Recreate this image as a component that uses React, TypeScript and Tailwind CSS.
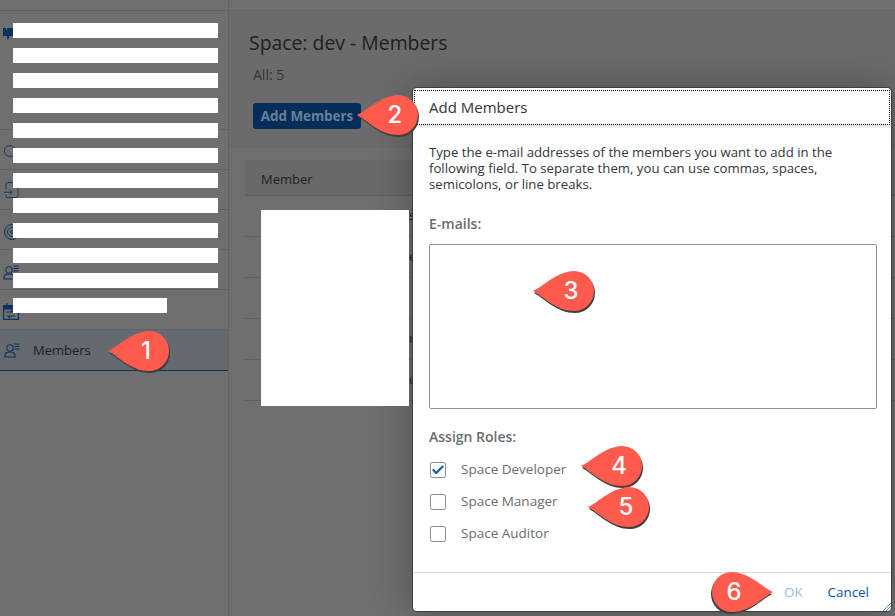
import { Check, Cloud, FileInput, Target } from "lucide-react";
import type { ReactNode } from "react";

const FONT = "font-['Open_Sans','Noto_Sans',sans-serif]";

const BARS = [218, 218, 218, 218, 218, 218, 218, 218, 218, 218, 218, 167];

const ROWS = [
  { tail: "s" },
  { tail: "e" },
  { tail: "" },
  { tail: "r" },
  { tail: "c" },
];

function UserListIcon() {
  return (
    <svg width="16" height="16" viewBox="0 0 16 16" fill="none" stroke="#0a3160" strokeWidth="1.1">
      <circle cx="6" cy="6" r="3.2" />
      <path d="M1 15v-1.5C1 11 3 10 6 10s5 1 5 3.5V15z" />
      <path d="M10.5 2h5M10.5 4.5h5M10.5 7h5" />
    </svg>
  );
}

function CalendarIcon() {
  return (
    <svg width="16" height="18" viewBox="0 0 16 18" fill="none" stroke="#0a3160" strokeWidth="1.2" className="mt-[12px]">
      <rect x="0.6" y="3.6" width="14.8" height="13.8" />
      <path d="M1 4h14v3H1z" fill="#0a3160" />
      <path d="M4 1v3M11 1v3M3 10h7l-2-2M12 14H5l2 2" />
    </svg>
  );
}

function NavRow({ icon, h, children }: { icon: ReactNode; h: string; children?: ReactNode }) {
  return (
    <div className={`${h} flex border-b border-[#626262] pl-[3px]`}>
      {icon}
      {children}
    </div>
  );
}

function Marker({ n, pos, flip }: { n: number; pos: string; flip?: boolean }) {
  return (
    <div className={`absolute ${pos} h-[40px] w-[62px]`}>
      <svg
        width="62"
        height="42"
        viewBox="0 0 62 42"
        className={`absolute inset-0 ${flip ? "-scale-x-100" : ""}`}
      >
        <path
          d="M1 22C12 17 24 3 42 2a20 20 0 0 1 0 40C24 42 12 28 1 22z"
          fill="#3f3f3f"
        />
        <path
          d="M0 20C11 15 23 1 41 0a20 20 0 0 1 0 40C23 40 11 26 0 20z"
          fill="#fe5a4d"
        />
      </svg>
      <span
        className={`absolute top-0 flex h-[40px] w-[40px] items-center justify-center font-['Inter',sans-serif] text-[24px] font-medium text-white ${
          flip ? "left-[3px]" : "left-[18px]"
        }`}
      >
        {n}
      </span>
    </div>
  );
}

function Role({ label, checked }: { label: string; checked?: boolean }) {
  return (
    <div className="flex h-[32px] items-center gap-[15px] pl-px">
      <span className="flex h-4 w-4 items-center justify-center rounded-[2px] border border-[#89919a] bg-white">
        {checked && <Check size={16} strokeWidth={3.5} color="#0a5aa8" />}
      </span>
      <span className="-mt-[2px] text-[13.5px] text-[#6a6d70]">{label}</span>
    </div>
  );
}

export default function App() {
  return (
    <div className={`relative flex h-[616px] w-[895px] overflow-hidden bg-[#6f6f6f] ${FONT}`}>
      {/* side nav */}
      <aside className="flex w-[229px] shrink-0 flex-col border-r border-[#626262] pt-[10px]">
        <div className="border-t border-[#626262]" />
        <NavRow
          h="h-[119px]"
          icon={
            <svg width="10" height="14" viewBox="0 0 10 14" className="mt-[16px]" fill="#0a3160">
              <path d="M0 1h3v2h1V1h6v8H6v2L5 13 4 11V9H0z" />
            </svg>
          }
        />
        <NavRow h="h-[40px]" icon={<Cloud size={18} color="#0a3160" strokeWidth={1.2} className="mt-[12px]" />} />
        <NavRow h="h-[40px]" icon={<FileInput size={18} color="#0a3160" strokeWidth={1.2} className="mt-[11px]" />} />
        <NavRow h="h-[40px]" icon={<Target size={18} color="#0a3160" strokeWidth={1.3} className="mt-[13px]" />} />
        <NavRow h="h-[40px]" icon={<div className="mt-[14px]"><UserListIcon /></div>} />
        <NavRow h="h-[40px]" icon={<CalendarIcon />} />
        <div className="flex h-[41px] items-center gap-[13px] border-b border-[#0a3160] bg-[#646a6f] pl-1">
          <UserListIcon />
          <span className="mt-[2px] text-[13px] text-[#1d1f21]">Members</span>
        </div>
      </aside>

      {/* page content */}
      <main className="flex min-w-0 flex-1 flex-col">
        <div className="h-[11px] border-b border-[#646464]" />
        <div className="h-[137px] bg-[#6b6b6b] pl-5">
          <h1 className="pt-[19px] text-[19.4px] leading-[26px] text-[#1f2021]">Space: dev - Members</h1>
          <p className="pl-1 pt-[11px] text-[14px] leading-[16px] text-[#333435]">All: 5</p>
          <button className="ml-1 mt-[20px] flex h-[26px] w-[108px] items-center justify-center rounded-[3px] bg-[#052d5a] text-[13.4px] font-bold text-[#6a8199]">
            Add Members
          </button>
        </div>
        <div className="flex-1 pl-4 pt-3">
          <div className="flex h-[36px] items-center border-b border-[#5e5e5e] bg-[#696969] pl-4 pt-[5px] text-[13px] text-[#1f2021]">
            Member
          </div>
          {ROWS.map((row, i) => (
            <div key={i} className="flex h-[41px] items-center border-b border-[#5f5f5f] pl-[164px] text-[13px] text-[#1f2021]">
              {row.tail}
            </div>
          ))}
        </div>
      </main>

      {/* dialog */}
      <section className="absolute left-[413px] top-[88px] flex h-[523px] w-[478px] flex-col rounded-[4px] bg-white shadow-[0_0_0_1px_#3e3e3e,0_0_40px_rgba(0,0,0,0.3)]">
        <header className="mx-[1px] mt-[2px] flex h-[35px] items-center border border-dotted border-black pl-[14px] text-[15px] text-[#32363a] shadow-[0_2px_2px_rgba(0,0,0,0.12)]">
          Add Members
        </header>
        <div className="flex-1 px-4 pt-[19px]">
          <p className="text-[13.2px] leading-[16px] text-[#32363a]">
            Type the e-mail addresses of the members you want to add in the
            <br />
            following field. To separate them, you can use commas, spaces,
            <br />
            semicolons, or line breaks.
          </p>
          <label className="mt-[24px] block text-[14px] font-semibold leading-[16px] text-[#6a6d70]">E-mails:</label>
          <div className="mt-[12px] h-[165px] w-[448px] rounded-[2px] border border-[#89919a]" />
          <div className="mt-[20px] text-[14px] font-semibold leading-[16px] text-[#6a6d70]">Assign Roles:</div>
          <div className="mt-[9px]">
            <Role label="Space Developer" checked />
            <Role label="Space Manager" />
            <Role label="Space Auditor" />
          </div>
        </div>
        <footer className="relative flex h-[39px] items-center justify-end gap-[25px] border-t border-[#d9d9d9] pr-[22px] text-[13.4px]">
          <span className="text-[#9bbcdb]">OK</span>
          <span className="text-[#0a5295]">Cancel</span>
          <svg width="8" height="8" viewBox="0 0 8 8" className="absolute bottom-0 right-0" stroke="#5b8fc4" strokeWidth="1">
            <path d="M0 8 8 0M3 8l5-5M6 8l2-2" />
          </svg>
        </footer>
      </section>

      {/* redacted blocks */}
      <div className="absolute left-[13px] top-[23px] flex flex-col gap-[10px]">
        {BARS.map((right, i) => (
          <div key={i} className="h-[15px] bg-white" style={{ width: right - 13 }} />
        ))}
      </div>
      <div className="absolute left-[261px] top-[210px] h-[196px] w-[148px] bg-white" />

      <Marker n={1} pos="left-[108px] top-[331px]" />
      <Marker n={2} pos="left-[357px] top-[95px]" />
      <Marker n={3} pos="left-[533px] top-[271px]" />
      <Marker n={4} pos="left-[581px] top-[446px]" />
      <Marker n={5} pos="left-[588px] top-[487px]" />
      <Marker n={6} pos="left-[711px] top-[572px]" flip />
    </div>
  );
}
